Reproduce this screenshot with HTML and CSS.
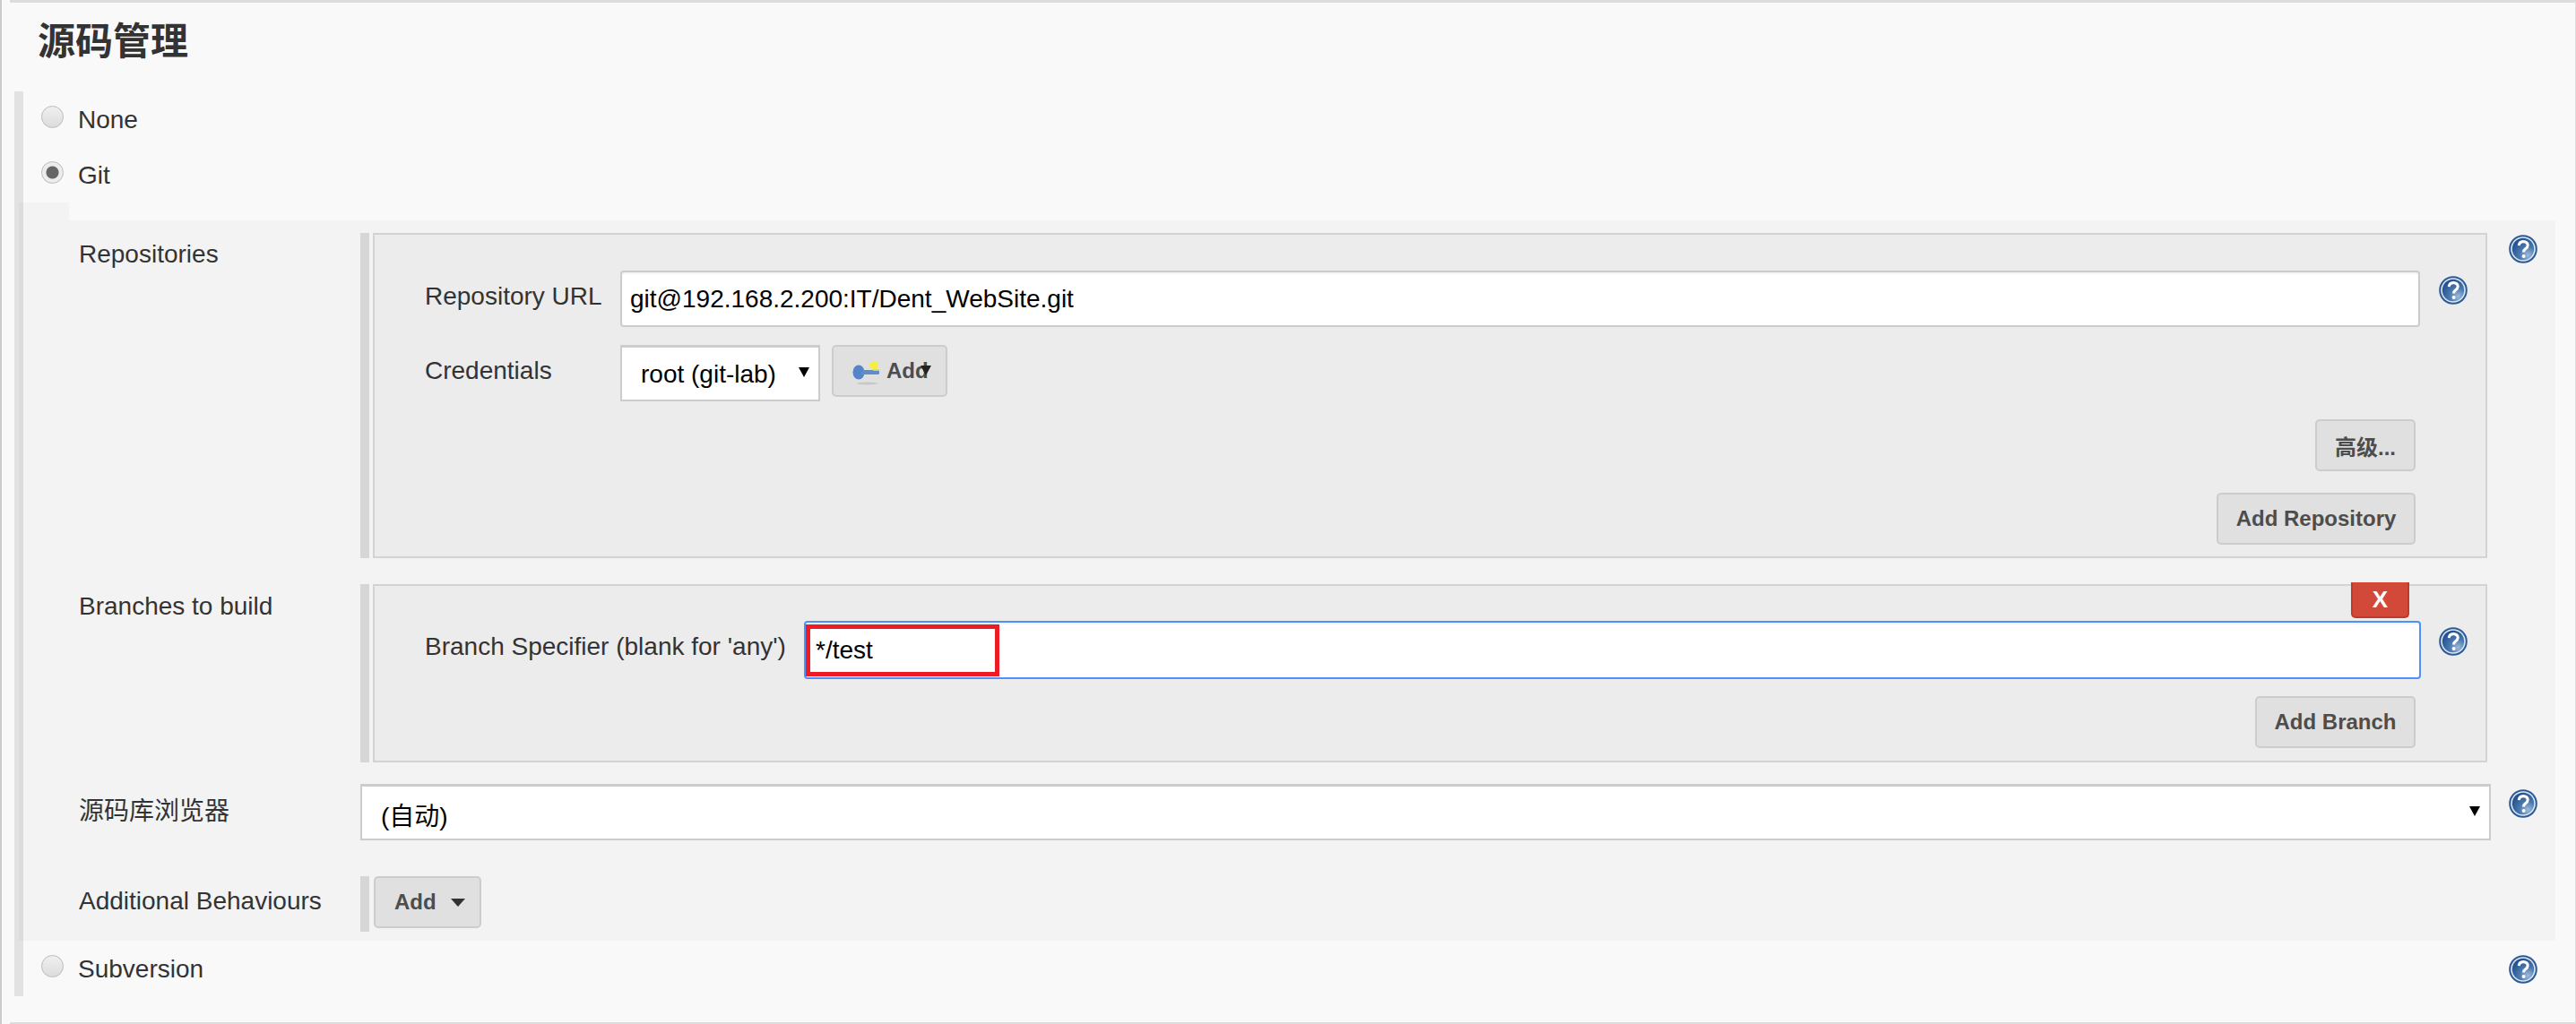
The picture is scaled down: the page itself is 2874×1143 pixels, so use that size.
FILE: index.html
```
<!DOCTYPE html>
<html lang="zh">
<head>
<meta charset="utf-8">
<title>源码管理</title>
<link rel="stylesheet" href="styles.css">
</head>
<body>
<svg class="defs" width="0" height="0" aria-hidden="true">
  <defs>
    <radialGradient id="helpFill" cx="0.72" cy="0.78" r="0.85">
      <stop offset="0" stop-color="#9dbbdc"/>
      <stop offset="0.45" stop-color="#4a78ae"/>
      <stop offset="1" stop-color="#1f4d8e"/>
    </radialGradient>
    <symbol id="help" viewBox="0 0 32 32">
      <circle cx="16" cy="16" r="15.8" fill="#2d5a96"/>
      <circle cx="16" cy="16" r="13.8" fill="#dbe6f1"/>
      <circle cx="16" cy="16" r="12.2" fill="url(#helpFill)"/>
      <path d="M11.3 12.2c.2-3 2.3-4.6 5-4.6 2.9 0 4.9 1.7 4.9 4.2 0 2-1.1 3-2.5 4-1.3.9-2.1 1.7-2.1 3.6" fill="none" stroke="#fff" stroke-width="3.1"/>
      <circle cx="16.6" cy="24" r="2" fill="#fff"/>
    </symbol>
  </defs>
</svg>
<div class="page">
  <div class="rule rule-top"></div>
  <h2 class="heading">源码管理</h2>
  <div class="radio-group">
    <label class="radio-row"><input class="radio" type="radio" name="scm"><span>None</span></label>
    <label class="radio-row"><input class="radio" type="radio" name="scm" checked><span>Git</span></label>
    <div class="git-wrap">
      <div class="git-tab"></div>
      <div class="git-block">
        <div class="row row-repo">
          <div class="row-label">Repositories</div>
          <div class="panel">
            <div class="panel-box panel-repo">
              <div class="field">
                <div class="field-label">Repository URL</div>
                <input class="text-input" type="text" value="git@192.168.2.200:IT/Dent_WebSite.git">
                <svg class="help help-inner"><use href="#help"/></svg>
              </div>
              <div class="field field-cred">
                <div class="field-label">Credentials</div>
                <div class="cred-controls">
                  <div class="select-wrap select-cred">
                    <select class="select"><option>root (git-lab)</option></select>
                  </div>
                  <button class="btn btn-add-cred" type="button">
                    <svg class="key" viewBox="0 0 32 32" width="32" height="32" aria-hidden="true">
                      <ellipse cx="17.5" cy="30" rx="12" ry="1.5" fill="#c8c8c8"/>
                      <circle cx="25" cy="10" r="5" fill="#f4ee4c"/>
                      <ellipse cx="8" cy="17.5" rx="6.5" ry="8" fill="#5585c6"/>
                      <rect x="11" y="15" width="20" height="5" rx="1.5" fill="#5d8ecb"/>
                      <rect x="24" y="14.5" width="7" height="1.5" fill="#d8c95a"/>
                    </svg>
                    <span>Add</span>
                    <i class="mini-caret"></i>
                  </button>
                </div>
              </div>
              <div class="btn-row btn-row-adv"><button class="btn btn-adv" type="button">高级...</button></div>
              <div class="btn-row btn-row-addrepo"><button class="btn btn-addrepo" type="button">Add Repository</button></div>
            </div>
          </div>
          <svg class="help help-outer"><use href="#help"/></svg>
        </div>
        <div class="row row-branch">
          <div class="row-label">Branches to build</div>
          <div class="panel">
            <div class="panel-box panel-branch">
              <button class="btn-x" type="button">X</button>
              <div class="field field-branch">
                <div class="field-label">Branch Specifier (blank for 'any')</div>
                <div class="branch-input-wrap">
                  <input class="text-input text-input-focus" type="text" value="*/test">
                  <div class="red-mark"></div>
                </div>
                <svg class="help help-inner"><use href="#help"/></svg>
              </div>
              <div class="btn-row btn-row-addbranch"><button class="btn btn-addbranch" type="button">Add Branch</button></div>
            </div>
          </div>
        </div>
        <div class="row row-browser">
          <div class="row-label">源码库浏览器</div>
          <div class="select-wrap select-browser">
            <select class="select"><option>(自动)</option></select>
          </div>
          <svg class="help help-browser"><use href="#help"/></svg>
        </div>
        <div class="row row-behave">
          <div class="row-label">Additional Behaviours</div>
          <div class="panel panel-add">
            <button class="btn btn-behave" type="button"><span>Add</span><i class="caret"></i></button>
          </div>
        </div>
      </div>
    </div>
    <div class="radio-row radio-row-last">
      <label class="radio-label"><input class="radio" type="radio" name="scm"><span>Subversion</span></label>
      <svg class="help help-svn"><use href="#help"/></svg>
    </div>
  </div>
  <div class="rule rule-bottom"></div>
</div>
</body>
</html>
```
FILE: styles.css
```
* { box-sizing: border-box; }
html, body { margin: 0; padding: 0; }
body {
  background: #f9f9f9;
  color: #333;
  font-family: "Liberation Sans", "Noto Sans CJK SC", sans-serif;
  font-size: 28px;
  line-height: 32px;
}
.defs { position: absolute; }
.page {
  height: 1143px;
  border-left: 2px solid #ccc;
  border-right: 1px solid #ddd;
  background: #f9f9f9;
  overflow: hidden;
}
.rule { height: 3px; background: #ddd; margin-left: 9px; }
.rule-bottom { height: 2px; margin-top: 29px; }
.heading {
  margin: 0;
  height: 99px;
  padding: 18px 0 0 40px;
  font-size: 42px;
  line-height: 52px;
  font-weight: 700;
  color: #333;
}
.radio-group {
  margin-left: 14px;
  margin-right: 22px;
  border-left: 10px solid #e2e2e2;
}
.radio-row {
  display: flex;
  align-items: flex-start;
  height: 62px;
  padding: 16px 0 0 20px;
}
.radio-row span { margin-left: 16px; }
.radio-label { display: flex; align-items: flex-start; }
.radio-row-last { justify-content: space-between; }
.radio {
  appearance: none;
  -webkit-appearance: none;
  margin: 0;
  width: 25px;
  height: 25px;
  border: 1px solid #bbb;
  border-radius: 50%;
  background: linear-gradient(#f0f0f0, #dcdcdc);
  flex: none;
}
.radio:checked {
  background: radial-gradient(circle, #666 0 6.5px, #ececec 7.5px);
}
.git-wrap {
  margin-left: -5px;
  border-left: 5px solid #dcdcdc;
}
.git-tab { width: 51px; height: 20px; background: #f3f3f3; }
.git-block {
  background: #f3f3f3;
  padding: 14px 0 10px;
}
.row {
  display: grid;
  grid-template-columns: 376px 1fr 72px;
}
.row-branch { margin-top: 29px; }
.row-browser { margin-top: 24px; }
.row-behave { margin-top: 40px; }
.row-label { padding: 8px 0 0 62px; }
.row-branch .row-label { padding-top: 9px; }
.row-browser .row-label { padding-top: 15px; }
.row-behave .row-label { padding-top: 12px; }
.panel {
  margin-right: 4px;
  border-left: 10px solid #d6d6d6;
  padding-left: 4px;
}
.panel-box {
  position: relative;
  background: #ececec;
  border: 2px solid #d3d3d3;
}
.panel-repo { height: 363px; padding-top: 40px; }
.panel-branch { height: 199px; padding-top: 39px; }
.field {
  display: grid;
  grid-template-columns: 274px 1fr 73px;
  align-items: start;
}
.field-branch { grid-template-columns: 479px 1804px 72px; }
.field-label { padding: 13px 0 0 56px; color: #333; white-space: nowrap; }
.field-cred { margin-top: 20px; }
.cred-controls { display: flex; gap: 13px; align-items: flex-start; }
.text-input {
  display: block;
  width: 100%;
  height: 63px;
  border: 2px solid #ccc;
  border-radius: 4px;
  background: #fff;
  box-shadow: inset 0 2px 2px rgba(0, 0, 0, .05);
  padding: 0 9px;
  font: 28px "Liberation Sans", sans-serif;
  color: #000;
  outline: 0;
}
.text-input-focus { height: 65px; border-color: #4d90fe; padding-left: 11px; }
.branch-input-wrap { position: relative; }
.red-mark {
  position: absolute;
  left: 2px;
  top: 4px;
  width: 216px;
  height: 58px;
  border: 5px solid #ed1c24;
  pointer-events: none;
}
.help { width: 32px; height: 32px; display: block; }
.help-inner { margin: 6px 0 0 21px; }
.field-branch .help-inner { margin: 7px 0 0 20px; }
.help-outer { margin: 2px 0 0 20px; }
.help-browser { margin: 6px 0 0 20px; }
.help-svn { margin-right: 20px; }
.select-wrap { position: relative; }
.select-wrap::after {
  content: "";
  position: absolute;
  top: 25px;
  right: 12px;
  border-style: solid;
  border-width: 11px 6px 0;
  border-color: #000 transparent transparent;
  pointer-events: none;
}
.select {
  appearance: none;
  -webkit-appearance: none;
  display: block;
  width: 100%;
  height: 63px;
  border: 2px solid #ccc;
  border-top-width: 3px;
  border-radius: 0;
  background: #fff;
  padding: 0 21px;
  font: 28px "Liberation Sans", "Noto Sans CJK SC", sans-serif;
  color: #000;
  outline: 0;
}
.select-browser .select { padding-top: 8px; }
.select-cred { width: 223px; flex: none; }
.select-browser { width: 100%; }
.btn {
  display: inline-flex;
  align-items: center;
  justify-content: center;
  height: 58px;
  border: 2px solid #ccc;
  border-radius: 5px;
  background: #e0e0e0;
  color: #4d4d4d;
  font: 700 24px "Liberation Sans", "Noto Sans CJK SC", sans-serif;
  padding: 0;
  white-space: nowrap;
}
.btn-add-cred {
  position: relative;
  width: 129px;
  justify-content: flex-start;
  padding-left: 20px;
  gap: 7px;
}
.key { flex: none; }
.mini-caret {
  position: absolute;
  left: 97px;
  top: 21px;
  border-style: solid;
  border-width: 11px 6px 0;
  border-color: #222 transparent transparent;
}
.btn-row { display: flex; justify-content: flex-end; padding-right: 78px; }
.btn-row-adv { margin-top: 20px; }
.btn-row-addrepo { margin-top: 24px; }
.btn-row-addbranch { margin-top: 19px; }
.btn-adv { width: 112px; }
.btn-addrepo { width: 222px; }
.btn-addbranch { width: 179px; }
.btn-x {
  position: absolute;
  top: -4px;
  right: 85px;
  width: 65px;
  height: 40px;
  border: 2px solid #c0392b;
  border-top: 0;
  border-radius: 0 0 5px 5px;
  background: #d24939;
  color: #fff;
  font: 700 26px "Liberation Sans", sans-serif;
  padding: 0;
}
.panel-add { grid-column: 2; height: 62px; display: flex; align-items: flex-start; }
.btn-behave {
  width: 120px;
  justify-content: flex-start;
  padding-left: 21px;
  gap: 16px;
  margin-left: 1px;
}
.caret {
  border-style: solid;
  border-width: 9px 8px 0;
  border-color: #333 transparent transparent;
}
```
